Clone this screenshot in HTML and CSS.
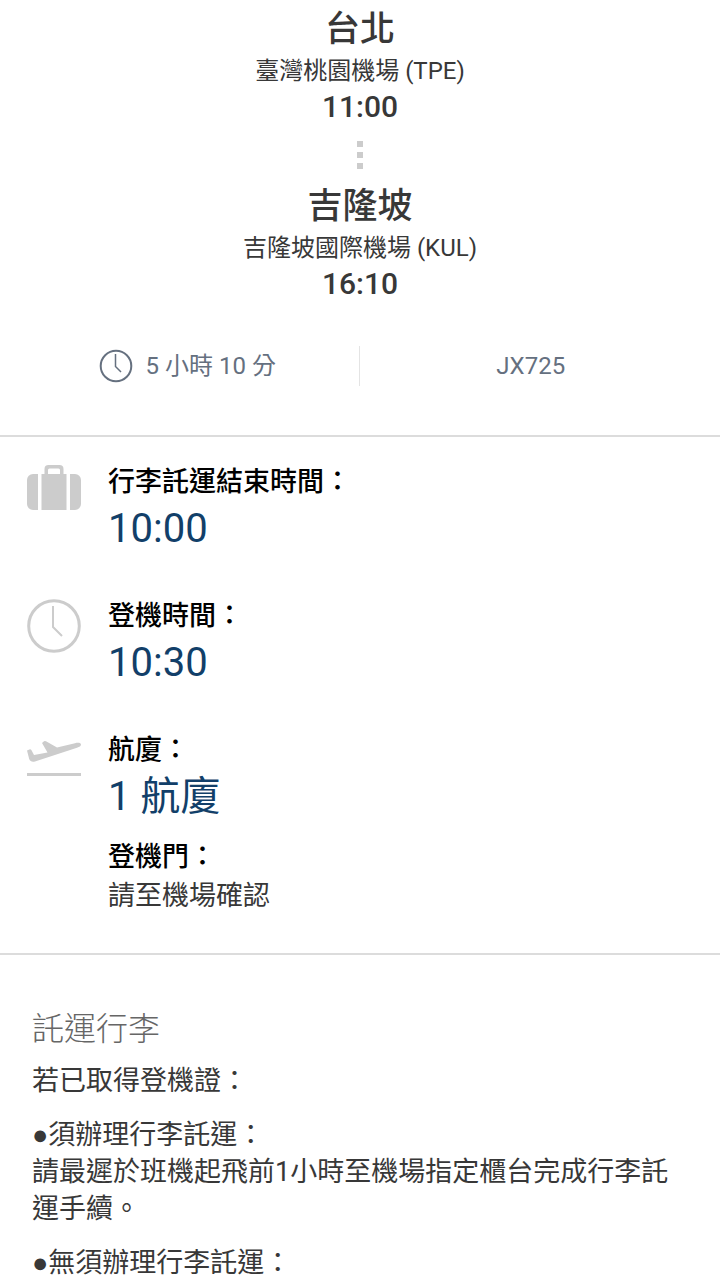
FILE: index.html
```html
<!DOCTYPE html>
<html lang="zh-Hant">
<head>
    <meta charset="UTF-8">
    <meta name="viewport" content="width=device-width, initial-scale=1.0">
    <title>航班資訊</title>
    <link rel="stylesheet" href="styles.css">
</head>
<body>

    <!-- Route -->
    <section class="route">
        <h1>台北</h1>
        <p class="airport">臺灣桃園機場 (TPE)</p>
        <p class="time">11:00</p>
        <div class="dots"><span></span><span></span><span></span></div>
        <h1>吉隆坡</h1>
        <p class="airport">吉隆坡國際機場 (KUL)</p>
        <p class="time">16:10</p>
    </section>

    <!-- Duration and flight number -->
    <section class="summary">
        <div class="duration">
            <svg class="clock-small" viewBox="0 0 34 34" fill="none" stroke="currentColor" stroke-width="2">
                <circle cx="17" cy="17" r="15.3"/>
                <path d="M16.5 5v12.5l5.5 5.5" stroke-width="1.5"/>
            </svg>
            <span>5 小時 10 分</span>
        </div>
        <div class="flight">JX725</div>
    </section>

    <!-- Boarding details -->
    <section class="details">
        <div class="item">
            <svg class="icon" viewBox="0 0 54 54" fill="currentColor">
                <path d="M6 9h5v36H6a6 6 0 0 1-6-6V15a6 6 0 0 1 6-6zM43 9h5a6 6 0 0 1 6 6v24a6 6 0 0 1-6 6h-5z"/>
                <path d="M14.5 9h3V4a4 4 0 0 1 4-4h11a4 4 0 0 1 4 4v5h3v36h-25zM21 9h12V5a1.5 1.5 0 0 0-1.5-1.5h-9A1.5 1.5 0 0 0 21 5z" fill-rule="evenodd"/>
            </svg>
            <div>
                <h2>行李託運結束時間：</h2>
                <p class="value">10:00</p>
            </div>
        </div>
        <div class="item">
            <svg class="icon" viewBox="0 0 54 54" fill="none" stroke="currentColor" stroke-width="3">
                <circle cx="27" cy="27" r="25.3"/>
                <path d="M26 7v21l9 9" stroke-width="2"/>
            </svg>
            <div>
                <h2>登機時間：</h2>
                <p class="value">10:30</p>
            </div>
        </div>
        <div class="item">
            <svg class="icon" viewBox="0 0 54 54" fill="currentColor">
                <path d="M0 17.5l3-1.200q1 0 1.500 1L7 22l13.500-2.500L15 10l2-1.800q1-.5 2 .1l11 6.200 18-4.300c3-.7 6-.5 6 1.300 0 1.500-1.500 2.500-4 3.200L8 28.500c-3 .8-4.800-.2-5.800-2.500z"/>
                <path d="M0 40h54v3H0z"/>
            </svg>
            <div>
                <h2>航廈：</h2>
                <p class="value">1 航廈</p>
                <h2 class="gate">登機門：</h2>
                <p class="note">請至機場確認</p>
            </div>
        </div>
    </section>

    <!-- Checked baggage -->
    <section class="baggage">
        <h3>託運行李</h3>
        <p>若已取得登機證：</p>
        <p><span class="bullet">●</span>須辦理行李託運：<br>請最遲於班機起飛前1小時至機場指定櫃台完成行李託運手續。</p>
        <p><span class="bullet">●</span>無須辦理行李託運：</p>
    </section>

</body>
</html>
```
FILE: styles.css
```css
* { margin: 0; padding: 0; box-sizing: border-box; }
body { background: #fff; color: #383838; font-family: Roboto, "Noto Sans CJK TC", sans-serif; font-size: 27px; }

/* Route */
.route { text-align: center; padding-top: 6px; }
.route h1 { font-size: 35px; line-height: 47px; font-weight: 500; }
.airport { font-size: 24px; line-height: 36px; }
.time { font-size: 30px; line-height: 36px; font-weight: 500; }
.dots { display: flex; flex-direction: column; align-items: center; gap: 5px; padding: 16px 0 14px; }
.dots span { width: 6px; height: 6px; background: #ccc; }

/* Duration and flight number */
.summary { display: flex; align-items: center; padding: 44px 0 49px; border-bottom: 2px solid #dcdcdc; color: #65707f; font-size: 24px; line-height: 40px; }
.duration, .flight { flex: 1; display: flex; align-items: center; justify-content: center; }
.duration { gap: 13px; padding-left: 16px; border-right: 1px solid #e4e4e4; }
.flight { padding-right: 18px; }
.clock-small { width: 34px; height: 34px; }

/* Boarding details */
.details { display: flex; flex-direction: column; gap: 40px; padding: 25px 27px 38px; border-bottom: 2px solid #dcdcdc; }
.item { display: flex; gap: 27px; }
.icon { width: 54px; height: 54px; margin-top: 3px; color: #ccc; }
.item h2 { color: #000; font-size: 27px; line-height: 40px; font-weight: 500; }
.value { color: #123f69; font-size: 40px; line-height: 54px; }
.item .gate { margin-top: 13px; }
.note { line-height: 38px; }

/* Checked baggage */
.baggage { padding: 50px 32px 0; }
.baggage h3 { color: #666; font-size: 32px; line-height: 48px; font-weight: 300; margin-bottom: 10px; }
.baggage p { line-height: 37px; margin-bottom: 17px; }
.baggage p:last-child { margin-bottom: 0; }
.bullet { font-family: "Liberation Sans", sans-serif; }
```
